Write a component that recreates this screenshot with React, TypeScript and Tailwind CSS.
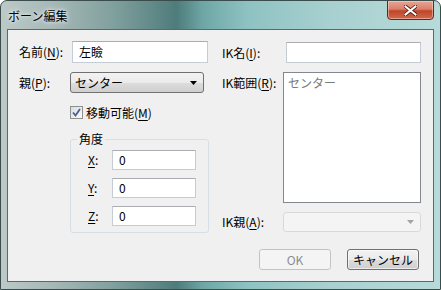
import React from "react";

const font = { fontFamily: '"Noto Sans CJK JP", "Noto Sans", sans-serif' };

function U({ c }: { c: string }) {
  return <span className="underline underline-offset-[2px]">{c}</span>;
}

function TextBox({ value, w, h }: { value?: string; w: string; h: string }) {
  return (
    <div
      className={`${w} ${h} bg-white border border-[#c4ccd6] border-t-[#abadb3] flex items-center pl-[6px] text-[12px] text-black`}
    >
      {value}
    </div>
  );
}

export default function App() {
  return (
    <div
      style={font}
      className="w-[441px] h-[290px] flex flex-col border border-[#3b4c4c] rounded-t-[7px] overflow-hidden bg-[linear-gradient(90deg,#bcc9c7_0%,#a5b8b6_12%,#7f9f9d_26%,#4e7c7b_40%,#6ea6a6_46%,#8ec2c2_56%,#a8d0d0_75%,#b7dada_100%)]"
    >
      {/* Title bar */}
      <div className="h-[28px] flex items-start shrink-0">
        <div className="pl-[7px] pt-[7px] text-[12px] leading-[16px] text-black [text-shadow:0_0_6px_rgba(255,255,255,0.9),0_0_3px_rgba(255,255,255,0.9)]">
          ボーン編集
        </div>
        <div className="ml-auto mr-[6px] -mt-[1px] w-[47px] h-[20px] rounded-b-[4px] border border-[#5a2b20] bg-[linear-gradient(180deg,#e8a594_0%,#d9806a_45%,#c0452a_55%,#cf6a4b_100%)] flex items-center justify-center shadow-[inset_0_0_0_1px_rgba(255,220,210,0.5)]">
          <svg width="13" height="11" viewBox="0 0 13 11">
            <path
              d="M1.5 1.5 L11.5 9.5 M11.5 1.5 L1.5 9.5"
              stroke="#4b1a10"
              strokeWidth="3.6"
              strokeLinecap="square"
            />
            <path
              d="M1.5 1.5 L11.5 9.5 M11.5 1.5 L1.5 9.5"
              stroke="#ffffff"
              strokeWidth="2"
              strokeLinecap="square"
            />
          </svg>
        </div>
      </div>

      {/* Client area */}
      <div className="mx-[6px] mb-[7px] flex-1 bg-[#f0f0f0] border border-[#4f6e6e] flex text-[12px] text-black leading-[16px]">
        {/* Left column */}
        <div className="w-[214px] pl-[11px] pt-[11px] flex flex-col">
          <div className="flex items-center h-[22px]">
            <div className="w-[53px]">
              名前(<U c="N" />):
            </div>
            <TextBox value="左瞼" w="w-[136px]" h="h-[22px]" />
          </div>
          <div className="flex items-center h-[21px] mt-[9px]">
            <div className="w-[51px]">
              親(<U c="P" />):
            </div>
            <div className="w-[134px] h-[21px] rounded-[3px] border border-[#707070] bg-[linear-gradient(180deg,#f2f2f2_0%,#ebebeb_50%,#dddddd_50%,#cfcfcf_100%)] flex items-center pl-[4px] pr-[6px]">
              <span className="flex-1">センター</span>
              <svg width="7" height="4" viewBox="0 0 7 4">
                <path d="M0 0 H7 L3.5 4 Z" fill="#000" />
              </svg>
            </div>
          </div>
          <div className="flex items-center mt-[12px] ml-[51px] h-[15px]">
            <div className="w-[13px] h-[13px] border border-[#8e8f8f] bg-[linear-gradient(135deg,#dcdcdc,#fbfbfb)] flex items-center justify-center">
              <svg width="9" height="9" viewBox="0 0 9 9">
                <path
                  d="M1 4.5 L3.5 7.5 L8 1"
                  stroke="#4a5f97"
                  strokeWidth="1.8"
                  fill="none"
                />
              </svg>
            </div>
            <span className="ml-[3px]">
              移動可能(<U c="M" />)
            </span>
          </div>
          <div className="relative mt-[19px] ml-[51px] w-[139px] h-[94px] border border-[#d5dfe5] rounded-[3px] pt-[10px] pl-[17px] flex flex-col gap-[8px]">
            <div className="absolute -top-[9px] left-[6px] px-[2px] bg-[#f0f0f0]">角度</div>
            {["X", "Y", "Z"].map((k) => (
              <div key={k} className="flex items-center h-[20px]">
                <div className="w-[24px]">
                  <U c={k} />:
                </div>
                <TextBox value="0" w="w-[84px]" h="h-[20px]" />
              </div>
            ))}
          </div>
        </div>

        {/* Right column */}
        <div className="w-[199px] ml-[0px] pt-[12px] flex flex-col">
          <div className="flex items-center h-[21px]">
            <div className="w-[64px]">
              IK名(<U c="I" />):
            </div>
            <TextBox w="w-[135px]" h="h-[21px]" />
          </div>
          <div className="flex items-start mt-[9px]">
            <div className="w-[61px] pt-[3px]">
              IK範囲(<U c="R" />):
            </div>
            <div className="w-[138px] h-[131px] bg-white border border-[#828790] pl-[4px] pt-[2px] text-[#7a7a7a]">
              センター
            </div>
          </div>
          <div className="flex items-center h-[20px] mt-[9px]">
            <div className="w-[61px]">
              IK親(<U c="A" />):
            </div>
            <div className="w-[138px] h-[20px] rounded-[3px] border border-[#d9d9d9] bg-[#f4f4f4] flex items-center justify-end pr-[6px]">
              <svg width="7" height="4" viewBox="0 0 7 4">
                <path d="M0 0 H7 L3.5 4 Z" fill="#a3a3a3" />
              </svg>
            </div>
          </div>
          <div className="flex justify-end gap-[16px] mt-[17px] mr-[2px]">
            <div className="w-[72px] h-[21px] rounded-[3px] border border-[#c1c4c6] bg-[#f4f4f4] flex items-center justify-center text-[#8d8d8d]">
              OK
            </div>
            <div className="w-[72px] h-[21px] rounded-[3px] border border-[#707070] bg-[linear-gradient(180deg,#f2f2f2_0%,#ebebeb_50%,#dddddd_50%,#cfcfcf_100%)] flex items-center justify-center shadow-[inset_0_0_0_1px_rgba(255,255,255,0.6)]">
              キャンセル
            </div>
          </div>
        </div>
      </div>
    </div>
  );
}
